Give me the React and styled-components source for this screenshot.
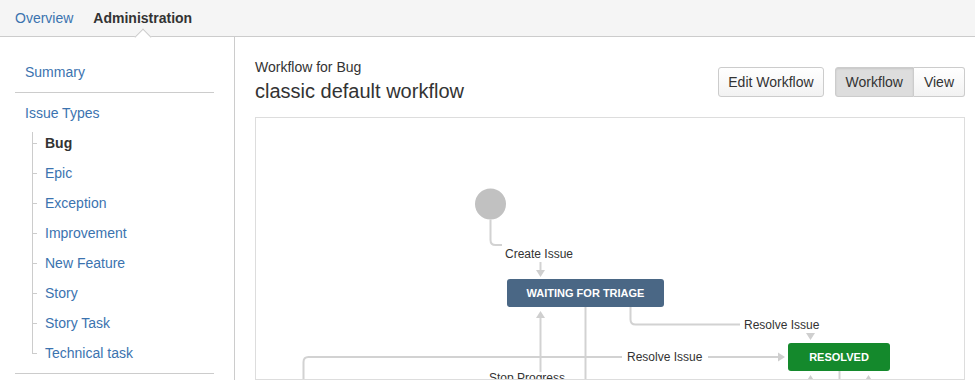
import React from 'react';
import styled, { createGlobalStyle } from 'styled-components';

const GlobalStyle = createGlobalStyle`
    html, body {
        margin: 0;
        padding: 0;
        background: #fff;
        overflow: hidden;
    }
    body {
        font-family: "Liberation Sans", Arial, sans-serif;
        font-size: 14px;
        color: #333;
    }
`;

const Page = styled.div`
    width: 975px;
    height: 380px;
    display: flex;
    flex-direction: column;
`;

const TopBar = styled.nav`
    height: 36px;
    flex: none;
    background: #f5f5f5;
    border-bottom: 1px solid #ccc;
    display: flex;
    align-items: center;
    gap: 20px;
    padding-left: 15px;
`;

const Tab = styled.a`
    position: relative;
    font-size: 14px;
    line-height: 36px;
    color: ${(props) => (props.active ? '#333' : '#3b73af')};
    font-weight: ${(props) => (props.active ? 'bold' : 'normal')};
    text-decoration: none;

    &::after {
        content: '';
        display: ${(props) => (props.active ? 'block' : 'none')};
        position: absolute;
        left: 50%;
        bottom: -7px;
        width: 11px;
        height: 11px;
        margin-left: -6px;
        background: #fff;
        border-left: 1px solid #ccc;
        border-top: 1px solid #ccc;
        transform: rotate(45deg);
    }
`;

const Body = styled.div`
    flex: 1;
    display: flex;
    min-height: 0;
`;

const Sidebar = styled.aside`
    width: 235px;
    flex: none;
    border-right: 1px solid #ccc;
    padding: 0 20px 0 15px;
    box-sizing: border-box;
`;

const NavGroup = styled.div`
    border-bottom: 1px solid #ccc;
    padding: ${(props) => props.pad};
`;

const NavLink = styled.a`
    display: block;
    padding-left: 10px;
    line-height: 20px;
    color: #3b73af;
    text-decoration: none;
`;

const Tree = styled.ul`
    list-style: none;
    margin: 5px 0 0;
    padding: 0 0 0 17px;
`;

const TreeItem = styled.li`
    position: relative;
    line-height: 30px;
    padding-left: 13px;
    color: ${(props) => (props.active ? '#333' : '#3b73af')};
    font-weight: ${(props) => (props.active ? 'bold' : 'normal')};

    &::before {
        content: '';
        position: absolute;
        left: 0;
        top: 15px;
        width: 5px;
        border-top: 1px solid #ccc;
    }
    &::after {
        content: '';
        position: absolute;
        left: 0;
        top: 0;
        bottom: 0;
        border-left: 1px solid #ccc;
    }
    &:first-child::after {
        top: 4px;
    }
    &:last-child::after {
        bottom: 14px;
    }
`;

const Main = styled.main`
    flex: 1;
    padding: 20px 10px 0 20px;
    display: flex;
    flex-direction: column;
    min-width: 0;
`;

const Header = styled.div`
    display: flex;
    justify-content: space-between;
    align-items: flex-start;
    margin-bottom: 14px;
`;

const SubTitle = styled.div`
    font-size: 14px;
    line-height: 20px;
    color: #333;
`;

const Title = styled.h1`
    margin: 2px 0 0;
    font-size: 20px;
    font-weight: normal;
    line-height: 24px;
    color: #333;
`;

const Actions = styled.div`
    display: flex;
    gap: 11px;
    margin-top: 10px;
`;

const Button = styled.button`
    height: 30px;
    padding: 0 ${(props) => props.pad || '10px'};
    font-family: inherit;
    font-size: 14px;
    color: #333;
    background: ${(props) => (props.pressed ? '#ddd' : 'linear-gradient(#fff, #f2f2f2)')};
    box-shadow: ${(props) => (props.pressed ? 'inset 0 1px 2px rgba(0,0,0,0.1)' : 'none')};
    border: 1px solid #ccc;
    border-radius: 3px;
    cursor: pointer;
`;

const ButtonGroup = styled.div`
    display: flex;

    & > ${Button}:first-child {
        border-radius: 3px 0 0 3px;
    }
    & > ${Button}:last-child {
        border-radius: 0 3px 3px 0;
        border-left: 0;
    }
`;

const Canvas = styled.div`
    border: 1px solid #ddd;
    height: 300px;
    overflow: hidden;
    background: #fff;
`;

const line = { stroke: '#d2d2d2', strokeWidth: 2, fill: 'none' };
const head = '#cfcfcf';

const Label = ({ x, y, children }) => (
    <text x={x} y={y} fontSize="12" fill="#333" fontFamily="Liberation Sans, Arial, sans-serif">
        {children}
    </text>
);

const Node = ({ x, y, w, color, children }) => (
    <g>
        <rect x={x} y={y} width={w} height={28} rx={3} fill={color} />
        <text
            x={x + w / 2}
            y={y + 18}
            textAnchor="middle"
            fontSize="11"
            fontWeight="bold"
            fill="#fff"
            fontFamily="Liberation Sans, Arial, sans-serif"
        >
            {children}
        </text>
    </g>
);

const WorkflowDiagram = () => (
    <svg width="708" height="300" viewBox="256 118 708 300">
        <circle cx="490.5" cy="204" r="15.5" fill="#c1c1c1" />
        <path d="M490.5 219.5 V240 Q490.5 245 495.5 245 H502" {...line} />
        <Label x={505} y={258}>Create Issue</Label>
        <path d="M540.5 262 V270" {...line} />
        <polygon points="536,270 545,270 540.5,277" fill={head} />

        <Node x={507} y={279} w={157} color="#4a6785">WAITING FOR TRIAGE</Node>

        <path d="M540.5 318 V372" {...line} />
        <polygon points="536,318 545,318 540.5,311" fill={head} />
        <path d="M585.5 307 V420" {...line} />
        <path d="M630.5 307 V319.5 Q630.5 324.5 635.5 324.5 H740" {...line} />
        <Label x={744} y={329}>Resolve Issue</Label>
        <polygon points="806,333 815,333 810.5,340" fill={head} />

        <path d="M303.5 420 V362 Q303.5 357 308.5 357 H622" {...line} />
        <Label x={627} y={361}>Resolve Issue</Label>
        <path d="M708 357 H778" {...line} />
        <polygon points="778,352.5 778,361.5 785,357" fill={head} />

        <Node x={788} y={343} w={102} color="#14892c">RESOLVED</Node>

        <polygon points="806,382 815,382 810.5,375" fill={head} />
        <path d="M810.5 382 V420" {...line} />
        <polygon points="864,382 873,382 868.5,375" fill={head} />
        <path d="M868.5 382 V420" {...line} />
        <path d="M839.5 371 V420" {...line} />

        <Label x={489} y={382}>Stop Progress</Label>
    </svg>
);

const issueTypes = [
    'Bug',
    'Epic',
    'Exception',
    'Improvement',
    'New Feature',
    'Story',
    'Story Task',
    'Technical task',
];

const App = () => {
    return (
        <Page>
            <GlobalStyle />
            <TopBar>
                <Tab>Overview</Tab>
                <Tab active>Administration</Tab>
            </TopBar>
            <Body>
                <Sidebar>
                    <NavGroup pad="25px 0 10px">
                        <NavLink>Summary</NavLink>
                    </NavGroup>
                    <NavGroup pad="10px 0 5px">
                        <NavLink>Issue Types</NavLink>
                        <Tree>
                            {issueTypes.map((t) => (
                                <TreeItem key={t} active={t === 'Bug'}>
                                    {t}
                                </TreeItem>
                            ))}
                        </Tree>
                    </NavGroup>
                </Sidebar>
                <Main>
                    <Header>
                        <div>
                            <SubTitle>Workflow for Bug</SubTitle>
                            <Title>classic default workflow</Title>
                        </div>
                        <Actions>
                            <Button pad="9px">Edit Workflow</Button>
                            <ButtonGroup>
                                <Button pressed>Workflow</Button>
                                <Button>View</Button>
                            </ButtonGroup>
                        </Actions>
                    </Header>
                    <Canvas>
                        <WorkflowDiagram />
                    </Canvas>
                </Main>
            </Body>
        </Page>
    );
};

export default App;
